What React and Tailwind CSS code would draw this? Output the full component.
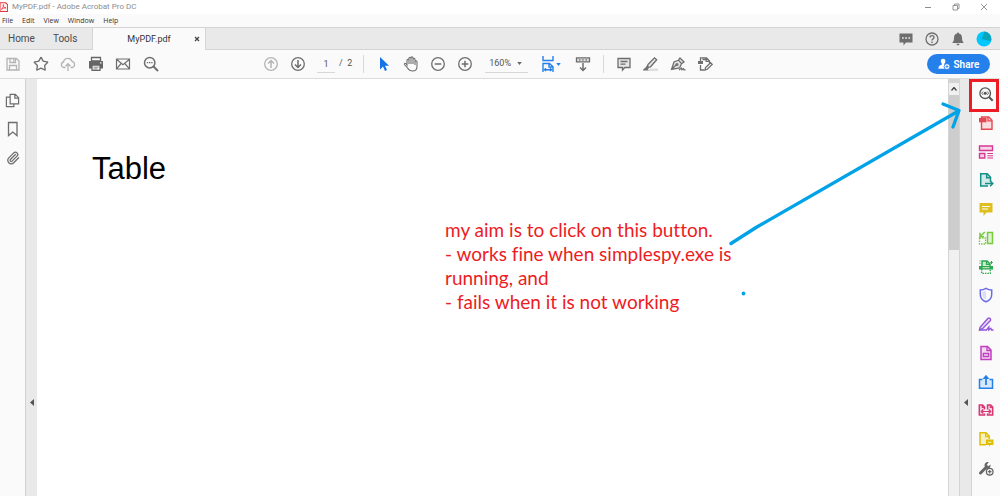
import React from "react";
import { Star, Paperclip } from "lucide-react";

function Icon({ children, className = "size-4" }) {
  return (
    <svg viewBox="0 0 16 16" className={`${className} shrink-0`} fill="none" stroke="currentColor" strokeWidth="1.3" aria-hidden="true">
      {children}
    </svg>
  );
}

function IconButton({ label, className = "text-[#6e6e6e]", children }) {
  return (
    <button type="button" aria-label={label} className={`flex size-4 shrink-0 items-center justify-center ${className}`}>
      {children}
    </button>
  );
}

const fileTools = [
  {
    label: "Save",
    tone: "text-[#b4b4b4]",
    art: <Icon><path d="M2 2.5h9.5L14 5v9H2zM5 2.5v4h5.5v-4M8.7 3.5v2M4.5 14V9.5h7V14" /></Icon>,
  },
  { label: "Add to favourites", tone: "text-[#6e6e6e]", art: <Star className="size-4" strokeWidth={2} /> },
  {
    label: "Upload",
    tone: "text-[#b4b4b4]",
    art: <Icon><path d="M5.5 11.5H4A2.8 2.8 0 0 1 3.5 6 4.4 4.4 0 0 1 12 5.3a3.2 3.2 0 0 1 .3 6.2h-1.6M8 15V7.8M5.5 10.2 8 7.7l2.5 2.5" /></Icon>,
  },
  {
    label: "Print",
    tone: "text-[#666]",
    art: (
      <Icon>
        <path d="M3.5 1.5h9V5h-9z" fill="#fafafa" />
        <path d="M1 5h14v7.5H1z" fill="currentColor" stroke="none" />
        <path d="M4 9.2h8v5.2H4z" fill="#fafafa" />
        <path d="M5.5 11.2h5M5.5 13h4" strokeWidth=".8" />
        <path d="M12 6.8h1.5" stroke="#fafafa" />
      </Icon>
    ),
  },
  {
    label: "Email",
    tone: "text-[#6e6e6e]",
    art: <Icon><path d="M1.5 3h13v10h-13zM1.5 3.3 8 8.7l6.5-5.4M1.5 12.8l4.7-5.3M14.5 12.8 9.8 7.5" strokeWidth="1.2" /></Icon>,
  },
  {
    label: "Find",
    tone: "text-[#6e6e6e]",
    art: <Icon><circle cx="6.7" cy="6.7" r="5.2" strokeWidth="1.5" /><path d="m10.5 10.5 4.500 4.500" strokeWidth="2" /><path d="M3.800 6.700h1.400M6 6.700h1.400M8.200 6.700h1.400" strokeWidth="1.300" /></Icon>,
  },
];

const reviewTools = [
  {
    label: "Add comment",
    art: <Icon><path d="M2 2.5h12v9H8.8L6.5 14v-2.5H2z" fill="#e6e6e6" /><path d="M4.5 5.5h7M4.5 8.2h5" /></Icon>,
  },
  {
    label: "Highlight text",
    art: <Icon><path d="M7 12.5h8V15H5z" fill="#dedede" stroke="none" /><path d="M5 8.500 11.500 1.800l2.200 2L7.500 10.800l-3 .5zM4.600 9.500 3 12l2 .2 1.500-1.200M1 13.800h3.500L3 12z" fill="#e6e6e6" /></Icon>,
  },
  {
    label: "Sign",
    art: <Icon><path d="M1.500 13.500 4 6l4.500-1.800 3 3.500L9.500 12zM1.500 13.500l5-5M8.500 4.200 10 2l4 4-2.500 1.700" fill="#e6e6e6" /><circle cx="7" cy="8.500" r=".9" /><path d="m9 14 2.500-2 .5 1.800 1.500-1 .5 1h1.500" /></Icon>,
  },
  {
    label: "Edit document",
    art: <Icon><path d="M3.500 6V1.800h6L12.500 5v2M9.200 2v3.300h3M3.500 9v5h4M5.500 3.500h3" /><path d="M1 5h5v3H1z" fill="currentColor" stroke="none" /><path d="m8 14 .6-2.400L13.500 6.700l1.700 1.700-4.900 4.900z" fill="#fafafa" /></Icon>,
  },
];

const railTools = [
  {
    label: "Find tools",
    tone: "text-[#555]",
    art: <Icon><circle cx="7.200" cy="7.200" r="5.300" strokeWidth="1.300" /><path d="m11 11 3.700 3.700" strokeWidth="2" /><circle cx="7.200" cy="7.200" r="1.500" fill="currentColor" stroke="none" /><path d="M5.200 5.500 3.700 7.200l1.500 1.700M9.200 5.500l1.500 1.700-1.500 1.700" strokeWidth=".9" /></Icon>,
  },
  {
    label: "Create PDF",
    tone: "text-[#e34850]",
    art: <Icon><path d="M3.500 2h7.200L14 5.200v9H3.500z" fill="#fbdfe0" strokeWidth="1.400" /><path d="M10 2v3.800h4" /><path d="M1 3h7.500v4.300H1z" fill="currentColor" stroke="none" /></Icon>,
  },
  {
    label: "Organize pages",
    tone: "text-[#d83790]",
    art: <Icon><path d="M1.500 2h13v4.500h-13zM1.500 9.500h5.300V14H1.500z" fill="#f7d5e8" strokeWidth="1.400" /><path d="M9.300 9.500H15M9.300 11.800H15M9.300 14H15" strokeWidth="1" /></Icon>,
  },
  {
    label: "Export PDF",
    tone: "text-[#149087]",
    art: <Icon><path d="M10 14H2.700V1.800h6.500l3.300 3.400V9" fill="#d3ebe8" strokeWidth="1.500" /><path d="M8.700 2v3.800h3.600M7 11.500h7.500M12 8.800l2.800 2.700L12 14.200" strokeWidth="1.500" /></Icon>,
  },
  {
    label: "Comment",
    tone: "text-[#dfbf20]",
    art: <Icon><path d="M1.500 2h13v9.500H8.500L5.500 15v-3.500h-4z" fill="currentColor" stroke="none" /><path d="M4 5.500h8M4 8h6" stroke="#fff" strokeWidth="1" /></Icon>,
  },
  {
    label: "Compare files",
    tone: "text-[#7ac943]",
    art: <Icon><path d="M9.500 2.500h5v11h-5z" fill="#def3cf" strokeWidth="1.500" /><path d="M1.500 8v6h6V8z" strokeDasharray="1.500 1" /><path d="M6.800 2 2.500 6.300M2 2.800v4h4" strokeWidth="1.600" /></Icon>,
  },
  {
    label: "Scan and OCR",
    tone: "text-[#2da84f]",
    art: <Icon><path d="M4 7V2h5l3 3v2" fill="#cfecd6" strokeWidth="1.500" /><path d="M8.500 2v3.300H12" /><path d="M1 7h14v3.500H1z" fill="currentColor" stroke="none" /><path d="M4.500 8.700h7" stroke="#cfecd6" strokeWidth="1" /><path d="M3.700 10v4.300h8.600V10" strokeDasharray="1.500 1" /><path d="M1.500 4.300h1M13.500 2v3M12.200 3.500h2.600M1.500 2h1" strokeWidth="1" /></Icon>,
  },
  {
    label: "Protect",
    tone: "text-[#6b6bea]",
    art: <Icon><path d="M8 1.300c1.800 1.100 3.500 1.700 5.700 1.700v4.500c0 3.700-2.200 6-5.700 7.300-3.500-1.300-5.700-3.600-5.700-7.300V3C4.500 3 6.200 2.400 8 1.300z" strokeWidth="1.500" /><path d="M8 3.500v9C5.500 11.200 4.300 9.800 4.300 7.500V4.800C6 4.700 7 4.200 8 3.500z" fill="#dcdcf9" stroke="none" /></Icon>,
  },
  {
    label: "Fill and sign",
    tone: "text-[#9256d9]",
    art: <Icon><path d="m2 11.500 7.800-9a1.600 1.600 0 0 1 2.400 2.200l-7.700 8L1.500 14z" fill="#eadcf8" strokeWidth="1.400" /><path d="M1.500 14h7l2.300-3v3l2-1.700.8 1.700H15.500" strokeWidth="1.400" /></Icon>,
  },
  {
    label: "Redact",
    tone: "text-[#bf3fc0]",
    art: <Icon><path d="M3 1.500h6.500L13 5v9.500H3z" fill="#f1d7f1" strokeWidth="1.500" /><path d="M9 1.500v4h4M5.300 8.500h5.400v3H5.300z" /></Icon>,
  },
  {
    label: "Send for review",
    tone: "text-[#2680eb]",
    art: <Icon><path d="M4.500 5.500h-3v8.700h13V5.500h-3" fill="#d7e8fb" strokeWidth="1.500" /><path d="M8 11V3" strokeWidth="1.800" /><path d="M8 .8 11.500 5h-7z" fill="currentColor" stroke="none" /></Icon>,
  },
  {
    label: "Combine files",
    tone: "text-[#d83772]",
    art: <Icon><path d="M6.500 7.500V5l-2-2H1.300v10h5.200v-1.500M9.500 7.500V3h3.200l2 2v8H9.500v-1.500" fill="#f8d5e2" strokeWidth="1.500" /><path d="M3.500 9.500h9M5.300 7.500l-2 2 2 2M10.700 7.500l2 2-2 2M4.300 3v2.300h2M12.300 3v2.300h2.300" strokeWidth="1.200" /></Icon>,
  },
  {
    label: "Request comments",
    tone: "text-[#dfbf00]",
    art: <Icon><path d="M8 13.700H2V1.800h6l3.300 3.400V8" fill="#f8f0c2" strokeWidth="1.500" /><path d="M7.700 2v3.500h3.500" /><path d="M8 8.500h7.500V14h-3L11 15.500V14H8z" fill="currentColor" stroke="none" /><path d="M10 11.200h3.500" stroke="#fff" strokeWidth=".8" /></Icon>,
  },
  {
    label: "More tools",
    tone: "text-[#666]",
    art: <Icon><path d="m2.500 13 5-5" strokeWidth="3" strokeLinecap="round" /><path d="M12.500 4.500 10.300 6.300 8.800 4.800 10.800 2C8 1.500 6 3.500 6.700 6.500L8 8.700c2.500.8 5-1 4.500-4.200z" fill="currentColor" stroke="none" /><circle cx="11.700" cy="11.700" r="3.300" fill="#fafafa" strokeWidth="1.300" /><path d="M11.700 9.900v3.600M9.900 11.700h3.600" strokeWidth="1.200" /></Icon>,
  },
];

function TitleBar() {
  return (
    <header className="flex h-[14px] items-center bg-white text-[#8c8c8c]">
      <svg viewBox="0 0 10 12" className="h-3 w-2 shrink-0" aria-hidden="true">
        <path d="M0 .7h7L9.500 3v8.500H0z" fill="#fff0f0" stroke="#e8343c" strokeWidth="1.300" />
        <path d="M1.800 9C4 6.800 4.800 4.500 4.200 3c-.8 1 .5 4 3.500 4.200C5.500 6.800 3 7.800 1.800 9z" fill="none" stroke="#e8343c" />
      </svg>
      <h1 className="ml-1 text-[8px] leading-3">MyPDF.pdf - Adobe Acrobat Pro DC</h1>
      <div className="ml-auto flex items-center gap-5 pr-3">
        <button type="button" aria-label="Minimize" className="size-2"><svg viewBox="0 0 8 8" className="size-2" stroke="currentColor"><path d="M1 4.500h6" /></svg></button>
        <button type="button" aria-label="Restore" className="size-2"><svg viewBox="0 0 8 8" className="size-2" fill="none" stroke="currentColor" strokeWidth=".9"><path d="M1 2.500h4.500V7H1zM2.500 2.500V1H7v4.500H5.500" /></svg></button>
        <button type="button" aria-label="Close" className="size-2"><svg viewBox="0 0 8 8" className="size-2" stroke="currentColor" strokeWidth=".9"><path d="m1 1 6 6M7 1 1 7" /></svg></button>
      </div>
    </header>
  );
}

function MenuBar() {
  return (
    <nav aria-label="Menu" className="flex h-[13px] items-center gap-[9px] bg-[#fafafa] pl-[2px] text-[7px] leading-3 text-[#333]">
      {["File", "Edit", "View", "Window", "Help"].map((name) => (
        <button key={name} type="button" className="font-['Open_Sans',sans-serif]">{name}</button>
      ))}
    </nav>
  );
}

function TabBar() {
  return (
    <div className="flex h-[23px] items-stretch border-y border-[#d4d4d4] bg-[#e9e9e9] text-[10px] leading-4 text-[#4b4b4b]">
      <div className="flex w-[92px] gap-[18px] pl-2">
        <button type="button">Home</button>
        <button type="button">Tools</button>
      </div>
      <div className="-mb-px flex w-[114px] items-center border-x border-[#d4d4d4] bg-[#fafafa] pr-1">
        <button type="button" className="flex-1 pl-3 text-center text-[9px] text-[#333]">MyPDF.pdf</button>
        <button type="button" aria-label="Close tab" className="flex size-2 items-center justify-center">
          <svg viewBox="0 0 6 6" className="size-[6px]" stroke="#444" strokeWidth="1.300"><path d="m1 1 4 4M5 1 1 5" /></svg>
        </button>
      </div>
      <div className="ml-auto flex items-center gap-[10px] pr-2">
        <IconButton label="Messages"><Icon><path d="M1.500 2.500h13v9H8L5.500 14.500v-3h-4z" fill="currentColor" stroke="none" /><path d="M4 7h1.700M7.200 7h1.700M10.400 7h1.700" stroke="#e9e9e9" strokeWidth="1.500" /></Icon></IconButton>
        <IconButton label="Help"><Icon><circle cx="8" cy="8" r="6" /><path d="M6 6.500C6 4 10 4 10 6.500 10 8 8 7.800 8 9.500M8 10.500V12" strokeWidth="1.400" /></Icon></IconButton>
        <IconButton label="Notifications"><Icon><path d="M8 1.500a1 1 0 0 1 1 1c2 .6 3 2 3 4.500 0 2.500.7 3.700 1.800 5H2.200C3.300 10.700 4 9.500 4 7c0-2.500 1-3.900 3-4.500a1 1 0 0 1 1-1zM6.500 12.700h3c0 2-3 2-3 0z" fill="currentColor" stroke="none" /></Icon></IconButton>
        <button type="button" aria-label="Account" className="size-4">
          <svg viewBox="0 0 16 16" className="size-4"><circle cx="8" cy="8" r="7.500" fill="#00c8ff" /><path d="M8.500.6A7.500 7.500 0 0 1 15.300 8l-.4 2.300L5.500 8z" fill="#08a5bd" /></svg>
        </button>
      </div>
    </div>
  );
}

function Divider() {
  return <span className="h-[18px] w-px shrink-0 bg-[#d8d8d8]" />;
}

function Caret({ className = "" }) {
  return <svg viewBox="0 0 6 4" className={`h-[3px] w-[5px] shrink-0 ${className}`} fill="currentColor" aria-hidden="true"><path d="M0 0h6L3 4z" /></svg>;
}

function Toolbar() {
  return (
    <div role="toolbar" aria-label="Document tools" className="flex h-[29px] items-center border-b border-[#dcdcdc] bg-[#fafafa] pr-[10px] pl-[5px] text-[9px] text-[#555]">
      <div className="flex w-[154px] justify-between">
        {fileTools.map((t) => <IconButton key={t.label} label={t.label} className={t.tone}>{t.art}</IconButton>)}
      </div>
      <div className="ml-[104px] flex items-center gap-[11px]">
        <IconButton label="Previous page" className="text-[#b4b4b4]"><Icon><circle cx="8" cy="8" r="6.300" /><path d="M8 12V4.500M5 7.500l3-3 3 3" strokeWidth="1.500" /></Icon></IconButton>
        <IconButton label="Next page"><Icon><circle cx="8" cy="8" r="6.300" /><path d="M8 4v7.500M5 8.500l3 3 3-3" strokeWidth="1.500" /></Icon></IconButton>
        <div className="flex items-center gap-1">
          <input aria-label="Page number" defaultValue="1" className="h-[18px] w-[18px] border-b border-[#d8d8d8] bg-transparent text-center outline-none" />
          <span>/&nbsp; 2</span>
        </div>
        <Divider />
      </div>
      <div className="ml-3 flex items-center gap-[11px]">
        <IconButton label="Select" className="text-[#1473e6]"><Icon><path d="M4 1v12.500l3-3 2 4.500 2-1-2-4.300h4z" fill="currentColor" stroke="none" /></Icon></IconButton>
        <IconButton label="Pan"><Icon><path d="M4 9V4.500C4 3 6 3 6 4.500V8 2.500C6 1 8 1 8 2.500V8 2c0-1.500 2-1.500 2 0v6-4.500C10 2 12 2 12 3.500V9 6c0-1.500 2-1.500 2 0v4.500c0 2.500-1.800 4.500-4.500 4.500-2.500 0-3.700-1-5-3L1.500 8.500C1 7 2.500 6.500 4 9z" strokeWidth="1.100" /></Icon></IconButton>
        <IconButton label="Zoom out"><Icon><circle cx="8" cy="8" r="6.300" /><path d="M4.700 8h6.600" strokeWidth="1.500" /></Icon></IconButton>
        <IconButton label="Zoom in"><Icon><circle cx="8" cy="8" r="6.300" /><path d="M4.700 8h6.600M8 4.700v6.600" strokeWidth="1.500" /></Icon></IconButton>
      </div>
      <div className="ml-3 flex w-[43px] items-center border-b border-[#d8d8d8]">
        <select aria-label="Zoom level" className="h-[17px] w-8 appearance-none bg-transparent pl-1 outline-none"><option>160%</option></select>
        <Caret className="text-[#666]" />
      </div>
      <button type="button" aria-label="Fit width" className="ml-3 flex items-center text-[#2680eb]">
        <Icon><path d="M3 0v4.500h10V0M3 16V7.500h6.500L13 10.800V16M9 7.500V11h4M4.500 13.700h7M6 12.300l-1.500 1.400L6 15M10 12.300l1.500 1.400L10 15" strokeWidth="1.400" /></Icon>
        <Caret />
      </button>
      <div className="ml-[14px] flex items-center gap-3">
        <IconButton label="Read mode"><Icon><path d="M1.500 1.800h13v4h-13z" fill="#ddd" /><path d="M4 3.800h1.500M7.200 3.800h1.500M10.500 3.800H12" /><path d="M8 7v7M5 11.500l3 3 3-3" strokeWidth="1.500" /></Icon></IconButton>
        <Divider />
        <div className="flex gap-[11px]">
          {reviewTools.map((t) => <IconButton key={t.label} label={t.label}>{t.art}</IconButton>)}
        </div>
      </div>
      <button type="button" className="ml-auto flex h-5 w-[63px] items-center justify-center gap-1 rounded-full bg-[#2680eb] text-[10px] font-semibold text-white">
        <svg viewBox="0 0 14 14" className="size-3" aria-hidden="true">
          <path d="M6 1c3.500 0 3 4 1.500 5.500v1.300C10 8.500 11 9.500 11 12.500H.5c0-3 1-4.200 4-4.700V6.500C3 5 2.500 1 6 1z" fill="#fff" />
          <circle cx="10.500" cy="10" r="3.400" fill="#fff" stroke="#2680eb" /><path d="M10.500 8.300v3.400M8.800 10h3.400" stroke="#2680eb" />
        </svg>
        Share
      </button>
    </div>
  );
}

function CollapseButton({ label }) {
  return (
    <button type="button" aria-label={label} className="mt-[320px] flex h-2 w-full justify-center">
      <svg viewBox="0 0 4 7" className="h-[7px] w-1" fill="#555"><path d="M4 0v7L0 3.500z" /></svg>
    </button>
  );
}

function Workspace() {
  return (
    <div className="relative flex flex-1 items-stretch">
      <nav aria-label="Panels" className="flex w-[25px] shrink-0 flex-col items-center gap-[13px] bg-[#fafafa] pt-[13px]">
        <IconButton label="Page thumbnails"><Icon className="size-[15px]"><path d="M5.500 1.500H11L14.500 5v6.500h-9zM10.500 1.500v4h4M5.500 4.500h-4v10h8v-3" strokeWidth="1.300" /></Icon></IconButton>
        <IconButton label="Bookmarks"><Icon><path d="M3.500 1.500H12v13l-4.250-3.500L3.500 14.500z" strokeWidth="1.300" /></Icon></IconButton>
        <IconButton label="Attachments"><Paperclip className="size-[14px]" strokeWidth={2.200} /></IconButton>
      </nav>
      <div className="w-3 shrink-0 border-l border-[#d0d0d0] bg-[#e9e9e9]"><CollapseButton label="Open panel" /></div>
      <main className="relative min-w-0 flex-1 bg-white">
        <h2 className="pt-[72px] pl-[55px] font-['Liberation_Sans',sans-serif] text-[31px] leading-9 text-black">Table</h2>
        <p className="absolute top-[139px] right-[203px] w-[300px] font-[Lato,sans-serif] text-[19px] leading-6 text-[#ed1c24] [font-variant-ligatures:none]">
          my aim is to click on this button.<br />- works fine when simplespy.exe is<br />running, and<br />- fails when it is not working
        </p>
      </main>
      <div className="flex w-3 shrink-0 flex-col border-x border-[#d4d4d4] bg-[#f0f0f0]">
        <div className="h-1 bg-[#d4d4d4]" />
        <button type="button" aria-label="Scroll up" className="flex h-3 items-center justify-center">
          <svg viewBox="0 0 6 4" className="h-1 w-[6px]" fill="none" stroke="#444" strokeWidth="1.300"><path d="m.5 3.500 2.500-3 2.500 3" /></svg>
        </button>
        <div className="h-[155px] bg-[#cdcdcd]" />
      </div>
      <div className="w-[11px] shrink-0 bg-[#e9e9e9]"><CollapseButton label="Close tools pane" /></div>
      <aside aria-label="Tools pane" className="w-[29px] shrink-0 border-l border-[#d4d4d4] bg-[#fafafa] pt-[7px]">
        <div className="flex h-[390px] flex-col items-center justify-between">
          {railTools.map((t) => <IconButton key={t.label} label={t.label} className={t.tone}>{t.art}</IconButton>)}
        </div>
      </aside>
      <div className="pointer-events-none absolute top-0 right-px h-[33px] w-[30px] border-3 border-[#ed1c24]" />
      <svg viewBox="0 0 280 230" className="pointer-events-none absolute top-0 right-0 h-[230px] w-[280px]" fill="none" stroke="#00a2e8" strokeWidth="3.300" strokeLinecap="round" strokeLinejoin="round" aria-hidden="true">
        <path d="M11 164.500 36 148.500 238.500 32M223 25l16 6.500L233 48" />
        <circle cx="23.500" cy="214.500" r="1.900" fill="#00a2e8" stroke="none" />
      </svg>
    </div>
  );
}

export default function App() {
  return (
    <div className="flex min-h-screen flex-col bg-white font-[Roboto,sans-serif]">
      <TitleBar />
      <MenuBar />
      <TabBar />
      <Toolbar />
      <Workspace />
    </div>
  );
}
